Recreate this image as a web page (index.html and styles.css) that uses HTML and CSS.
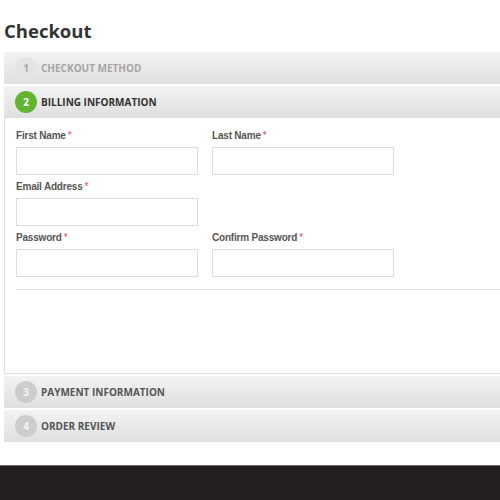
FILE: index.html
```html
<!DOCTYPE html>
<html>
<head>
<meta charset="utf-8">
<link rel="stylesheet" href="styles.css">
</head>
<body>
<div class="page">
  <h1 class="title">Checkout</h1>
  <div class="step step-done">
    <span class="num">1</span><span class="step-label">Checkout Method</span>
  </div>
  <div class="step step-active">
    <span class="num">2</span><span class="step-label">Billing Information</span>
  </div>
  <div class="panel">
    <div class="row">
      <div class="field">
        <label class="lbl">First Name<em>*</em></label>
        <div class="input"></div>
      </div>
      <div class="field">
        <label class="lbl">Last Name<em>*</em></label>
        <div class="input"></div>
      </div>
    </div>
    <div class="row">
      <div class="field">
        <label class="lbl">Email Address<em>*</em></label>
        <div class="input"></div>
      </div>
    </div>
    <div class="row">
      <div class="field">
        <label class="lbl">Password<em>*</em></label>
        <div class="input"></div>
      </div>
      <div class="field">
        <label class="lbl">Confirm Password<em>*</em></label>
        <div class="input"></div>
      </div>
    </div>
    <div class="rule"></div>
  </div>
  <div class="step step-todo">
    <span class="num">3</span><span class="step-label">Payment Information</span>
  </div>
  <div class="step step-todo">
    <span class="num">4</span><span class="step-label">Order Review</span>
  </div>
</div>
<div class="footer"></div>
</body>
</html>
```
FILE: styles.css
```css
html, body { margin: 0; padding: 0; background: #fff; }
body { width: 500px; height: 500px; overflow: hidden; }
.page { padding: 0 0 0 4px; }
.title {
  margin: 0;
  padding-top: 18px;
  height: 52px;
  box-sizing: border-box;
  font-family: "Open Sans", sans-serif;
  font-weight: 700;
  font-size: 18.5px;
  line-height: 26px;
  color: #333;
}
.step {
  height: 32px;
  margin-bottom: 2px;
  display: flex;
  align-items: center;
  padding-left: 11px;
  background: linear-gradient(#f3f3f3, #dfdfdf);
  font-family: "Open Sans", sans-serif;
  font-weight: 700;
  font-size: 10px;
  text-transform: uppercase;
}
.step-active { margin-bottom: 0; }
.num {
  width: 22px;
  height: 22px;
  border-radius: 50%;
  display: flex;
  align-items: center;
  justify-content: center;
  font-size: 10px;
  margin-right: 4px;
}
.step-done .num { background: #e4e4e4; color: #a8a8a8; }
.step-done .step-label { color: #a5a5a5; }
.step-active .num { background: #63b530; color: #fff; }
.step-active .step-label { color: #333; }
.step-todo .num { background: #cdcdcd; color: #f4f4f4; }
.step-todo .step-label { color: #555; }
.panel {
  height: 256px;
  box-sizing: border-box;
  border-left: 1px solid #ddd;
  border-bottom: 1px solid #ddd;
  padding: 11px 0 0 11px;
  margin-bottom: 2px;
}
.row { display: flex; gap: 14px; margin-bottom: 5px; }
.field { width: 182px; }
.lbl {
  display: block;
  height: 14px;
  margin-bottom: 4px;
  font-family: "Liberation Sans", Arial, sans-serif;
  font-weight: 700;
  font-size: 10px;
  letter-spacing: -0.2px;
  line-height: 14px;
  color: #555;
}
.lbl em { font-style: normal; color: #e05050; margin-left: 2px; font-weight: 400; }
.input {
  height: 28px;
  box-sizing: border-box;
  border: 1px solid #ddd;
  background: #fff;
}
.rule {
  margin-top: 12px;
  height: 0;
  border-top: 1px solid #e6e6e6;
}
.footer {
  margin-top: 23px;
  height: 40px;
  background: #231f20;
  border-top: 1px solid #6a6a6a;
}
```
